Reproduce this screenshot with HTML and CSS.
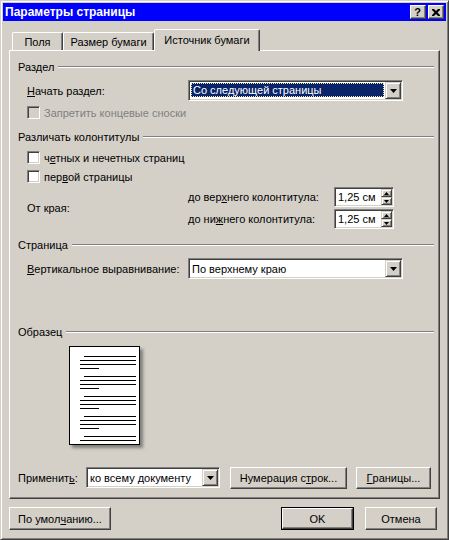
FILE: index.html
```html
<!DOCTYPE html>
<html lang="ru">
<head>
<meta charset="utf-8">
<title>Параметры страницы</title>
<link rel="stylesheet" href="styles.css">
</head>
<body>
<div class="window">
  <div class="titlebar">
    <span class="title">Параметры страницы</span>
    <div class="tbtns">
      <span class="tbtn help">?</span>
      <span class="tbtn"><svg width="8" height="7" viewBox="0 0 8 7"><path d="M0 0h2l2 2 2-2h2v1l-2.5 2.5L8 6v1H6L4 5 2 7H0V6l2.5-2.5L0 1z" fill="#000"/></svg></span>
    </div>
  </div>

  <div class="tabs">
    <div class="tab t1">Поля</div>
    <div class="tab t2">Размер бумаги</div>
    <div class="tab t3 active">Источник бумаги</div>
  </div>

  <div class="panel">
    <div class="gtitle g1"><span>Раздел</span><i class="gline"></i></div>
    <div class="row combo-row r1">
      <span class="lbl"><u>Н</u>ачать раздел:</span>
      <div class="combo focus"><span class="ctext"><span class="sel">Со следующей страницы</span></span><span class="dd"><svg width="7" height="4" viewBox="0 0 7 4"><path d="M0 0h7L3.5 4z" fill="#000"/></svg></span></div>
    </div>
    <div class="check disabled r2"><span class="box"></span><span>Запретить концевые сноски</span></div>

    <div class="gtitle g2"><span>Различать колонтитулы</span><i class="gline"></i></div>
    <div class="check r3"><span class="box white"></span><span>ч<u>е</u>тных и нечетных страниц</span></div>
    <div class="check r4"><span class="box white"></span><span>пер<u>в</u>ой страницы</span></div>
    <div class="spins">
      <span class="edge">От края:</span>
      <span class="slbl">до вер<u>х</u>него колонтитула:</span>
      <div class="spin"><span class="stext">1,25 см</span><span class="sbtns"><span class="sb"><svg width="5" height="3" viewBox="0 0 5 3"><path d="M2.5 0L5 3H0z" fill="#000"/></svg></span><span class="sb"><svg width="5" height="3" viewBox="0 0 5 3"><path d="M0 0h5L2.5 3z" fill="#000"/></svg></span></span></div>
      <span class="slbl">до ни<u>ж</u>него колонтитула:</span>
      <div class="spin"><span class="stext">1,25 см</span><span class="sbtns"><span class="sb"><svg width="5" height="3" viewBox="0 0 5 3"><path d="M2.5 0L5 3H0z" fill="#000"/></svg></span><span class="sb"><svg width="5" height="3" viewBox="0 0 5 3"><path d="M0 0h5L2.5 3z" fill="#000"/></svg></span></span></div>
    </div>

    <div class="gtitle g3"><span>Страница</span><i class="gline"></i></div>
    <div class="row combo-row r5">
      <span class="lbl"><u>В</u>ертикальное выравнивание:</span>
      <div class="combo"><span class="ctext">По верхнему краю</span><span class="dd"><svg width="7" height="4" viewBox="0 0 7 4"><path d="M0 0h7L3.5 4z" fill="#000"/></svg></span></div>
    </div>

    <div class="gtitle g4"><span>Образец</span><i class="gline"></i></div>
    <div class="preview">
      <div class="page">
        <svg width="69" height="97" viewBox="0 0 69 97">
          <g fill="#000">
            <rect x="14" y="9" width="52" height="1"/><rect x="10" y="13" width="56" height="1"/><rect x="10" y="17" width="56" height="1"/><rect x="10" y="21" width="19" height="1"/>
            <rect x="14" y="29" width="52" height="1"/><rect x="10" y="33" width="56" height="1"/><rect x="10" y="37" width="56" height="1"/><rect x="10" y="41" width="19" height="1"/>
            <rect x="14" y="49" width="52" height="1"/><rect x="10" y="53" width="56" height="1"/><rect x="10" y="57" width="56" height="1"/><rect x="10" y="61" width="19" height="1"/>
            <rect x="14" y="69" width="52" height="1"/><rect x="10" y="73" width="56" height="1"/><rect x="10" y="77" width="56" height="1"/><rect x="10" y="81" width="19" height="1"/>
            <rect x="14" y="89" width="52" height="1"/><rect x="10" y="93" width="56" height="1"/>
          </g>
        </svg>
      </div>
    </div>

    <div class="apply">
      <span class="alabel">Применит<u>ь</u>:</span>
      <div class="combo acombo"><span class="ctext">ко всему документу</span><span class="dd"><svg width="7" height="4" viewBox="0 0 7 4"><path d="M0 0h7L3.5 4z" fill="#000"/></svg></span></div>
      <span class="btn numbtn">Нумерация с<u>т</u>рок...</span>
      <span class="btn brdbtn"><u>Г</u>раницы...</span>
    </div>
  </div>

  <div class="actions">
    <span class="btn defbtn">По умол<u>ч</u>анию...</span>
    <span class="spacer"></span>
    <span class="okwrap"><span class="btn okbtn">OK</span></span>
    <span class="btn cancelbtn">Отмена</span>
  </div>
</div>
</body>
</html>
```

FILE: styles.css
```css
html, body {
  margin: 0;
  padding: 0;
  background: #d4d0c8;
}
body {
  font-family: "Liberation Sans", Arial, sans-serif;
  font-size: 11px;
  color: #000;
}
u { text-decoration: underline; text-underline-offset: 1px; }

.window {
  width: 449px;
  height: 540px;
  box-sizing: border-box;
  border: 1px solid;
  border-color: #d4d0c8 #404040 #404040 #d4d0c8;
  box-shadow: inset 1px 1px #fff, inset -1px -1px #808080;
  padding: 2px;
  background: #d4d0c8;
  display: flex;
  flex-direction: column;
}

.titlebar {
  height: 18px;
  background: #0000ff;
  display: flex;
  align-items: center;
  justify-content: space-between;
  flex: none;
}
.title {
  color: #fff;
  font-weight: bold;
  font-size: 12px;
  padding-left: 2px;
}
.tbtns {
  display: flex;
  gap: 2px;
  margin-right: 2px;
}
.tbtn {
  width: 16px;
  height: 14px;
  box-sizing: border-box;
  background: #d4d0c8;
  border: 1px solid;
  border-color: #fff #404040 #404040 #fff;
  box-shadow: inset -1px -1px #808080;
  display: flex;
  align-items: center;
  justify-content: center;
  font-weight: bold;
  font-size: 11px;
  line-height: 1;
}
.tbtn.help { padding-right: 1px; }

.tabs {
  display: flex;
  align-items: flex-end;
  height: 21px;
  margin: 8px 0 0 9px;
  flex: none;
  position: relative;
  z-index: 1;
}
.tab {
  height: 18px;
  box-sizing: border-box;
  border: 1px solid;
  border-bottom: none;
  border-color: #fff #404040 transparent #fff;
  box-shadow: inset -1px 0 #808080;
  border-radius: 2px 2px 0 0;
  display: flex;
  align-items: center;
  justify-content: center;
  padding-top: 1px;
}
.t1 { width: 51px; margin-right: 0; }
.t2 { width: 91px; }
.t3 { width: 106px; }
.tab.active {
  height: 22px;
  margin-bottom: -1px;
  background: #d4d0c8;
  padding-top: 0;
  padding-bottom: 2px;
}

.panel {
  margin: 0 6px;
  height: 449px;
  box-sizing: border-box;
  border: 1px solid;
  border-color: #fff #404040 #404040 #fff;
  box-shadow: inset -1px -1px #808080;
  padding: 0 5px 0 8px;
  flex: none;
}

.gtitle {
  display: flex;
  align-items: center;
  height: 14px;
}
.gline {
  flex: 1;
  height: 0;
  border-top: 1px solid #808080;
  border-bottom: 1px solid #fff;
  margin-left: 4px;
}
.g1 { margin-top: 9px; }
.g2 { margin-top: 11px; }
.g3 { margin-top: 9px; }
.g4 { margin-top: 46px; }

.combo-row {
  display: grid;
  grid-template-columns: 161px 215px;
  align-items: center;
  padding-left: 9px;
  height: 21px;
}
.r1 { margin-top: 6px; }
.r5 { margin-top: 6px; }

.combo {
  height: 21px;
  box-sizing: border-box;
  border: 1px solid;
  border-color: #808080 #fff #fff #808080;
  box-shadow: inset 1px 1px #404040, inset -1px -1px #d4d0c8;
  background: #fff;
  padding: 1px;
  display: flex;
  align-items: stretch;
}
.ctext {
  flex: 1;
  display: flex;
  align-items: center;
  padding-left: 2px;
  white-space: nowrap;
  overflow: hidden;
}
.combo.focus .ctext { padding: 1px 1px 2px 1px; }
.sel {
  flex: 1;
  align-self: stretch;
  display: flex;
  align-items: center;
  background: #0a246a;
  color: #fff;
  border: 1px dotted #e8e890;
  padding-left: 1px;
}
.dd {
  width: 16px;
  flex: none;
  box-sizing: border-box;
  background: #d4d0c8;
  border: 1px solid;
  border-color: #d4d0c8 #404040 #404040 #d4d0c8;
  box-shadow: inset 1px 1px #fff, inset -1px -1px #808080;
  display: flex;
  align-items: center;
  justify-content: center;
}

.check {
  display: flex;
  align-items: center;
  height: 13px;
  padding-left: 9px;
}
.check .box {
  width: 13px;
  height: 13px;
  box-sizing: border-box;
  border: 1px solid;
  border-color: #808080 #fff #fff #808080;
  box-shadow: inset 1px 1px #404040, inset -1px -1px #d4d0c8;
  background: #d4d0c8;
  margin-right: 4px;
  flex: none;
}
.check .box.white { background: #fff; }
.check.disabled { color: #808080; }
.r2 { margin-top: 5px; }
.r3 { margin-top: 7px; }
.r4 { margin-top: 6px; }

.spins {
  display: grid;
  grid-template-columns: 161px 146px 60px;
  grid-template-rows: 20px 20px;
  row-gap: 2px;
  align-items: center;
  padding-left: 9px;
  margin-top: 4px;
}
.edge { grid-row: 1 / span 2; grid-column: 1; }
.slbl { grid-column: 2; }
.spin {
  grid-column: 3;
  height: 20px;
  box-sizing: border-box;
  border: 1px solid;
  border-color: #808080 #fff #fff #808080;
  box-shadow: inset 1px 1px #404040, inset -1px -1px #d4d0c8;
  background: #fff;
  padding: 1px;
  display: flex;
}
.stext {
  flex: 1;
  display: flex;
  align-items: center;
  padding-left: 2px;
}
.sbtns {
  width: 11px;
  flex: none;
  display: flex;
  flex-direction: column;
}
.sb {
  flex: 1;
  box-sizing: border-box;
  background: #d4d0c8;
  border: 1px solid;
  border-color: #d4d0c8 #404040 #404040 #d4d0c8;
  box-shadow: inset 1px 1px #fff, inset -1px -1px #808080;
  display: flex;
  align-items: center;
  justify-content: center;
}

.preview {
  margin-top: 7px;
  padding-left: 51px;
  height: 106px;
}
.page {
  width: 71px;
  height: 99px;
  box-sizing: border-box;
  border: 1px solid #000;
  background: #fff;
  overflow: hidden;
  box-shadow: 3px 3px 3px rgba(60, 60, 60, 0.55);
}
.page svg { display: block; }

.apply {
  display: flex;
  align-items: center;
  height: 21px;
  margin-top: 15px;
}
.alabel { width: 68px; flex: none; }
.acombo { width: 134px; flex: none; }

.btn {
  box-sizing: border-box;
  background: #d4d0c8;
  border: 1px solid;
  border-color: #fff #404040 #404040 #fff;
  box-shadow: inset -1px -1px #808080;
  display: flex;
  align-items: center;
  justify-content: center;
  white-space: nowrap;
}
.numbtn { width: 117px; height: 22px; margin-left: 10px; }
.brdbtn { width: 75px; height: 22px; margin-left: 9px; }

.actions {
  display: flex;
  align-items: center;
  height: 23px;
  margin-top: 8px;
  padding: 0 9px 0 6px;
  flex: none;
}
.defbtn { width: 102px; height: 23px; }
.spacer { flex: 1; }
.okwrap {
  width: 73px;
  height: 23px;
  box-sizing: border-box;
  border: 1px solid #000;
  display: flex;
  margin-right: 11px;
}
.okbtn { flex: 1; }
.cancelbtn { width: 72px; height: 23px; }
```
